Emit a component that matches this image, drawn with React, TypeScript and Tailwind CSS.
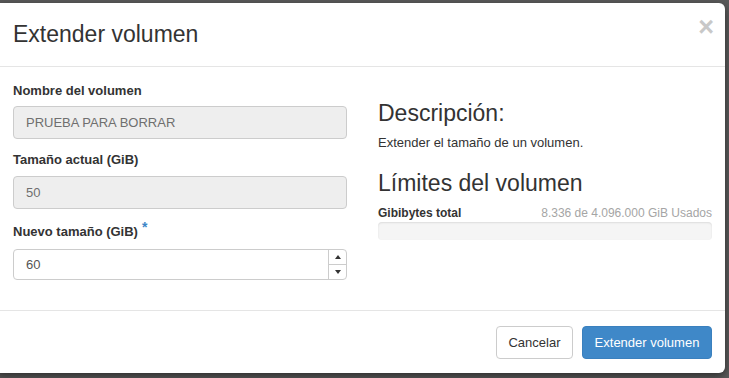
export default function App() {
  return (
    <div
      className="h-[378px] w-[729px] overflow-hidden bg-[#5a5a5a] pt-[3px]"
      style={{ fontFamily: '"Liberation Sans", Arial, sans-serif' }}
    >
      <div className="-ml-[5px] w-[730px] rounded-[6px] bg-white shadow-[0_3px_9px_rgba(0,0,0,0.5)]">
        {/* header */}
        <div className="flex h-[64px] items-start justify-between border-b border-[#e5e5e5] pl-[18px] pr-[13px] pt-[18px]">
          <h4 className="text-[23px] leading-[26px] text-[#333]">Extender volumen</h4>
          <button
            type="button"
            className="-mr-[2px] -mt-[7px] text-[27px] font-bold leading-[26px] text-[#c8c8c8]"
          >
            ×
          </button>
        </div>

        {/* body */}
        <div className="flex gap-[31px] pb-[30px] pl-[18px] pr-[13px] pt-[15px] text-[13px] text-[#333]">
          <div className="flex w-[334px] flex-col">
            <label className="mb-[6px] h-[18px] font-bold leading-[18px]">Nombre del volumen</label>
            <div className="mb-[12px] flex h-[33px] items-center rounded-[4px] border border-[#ccc] bg-[#eee] px-3 text-[#6f6f6f]">
              PRUEBA PARA BORRAR
            </div>
            <label className="mb-[7px] h-[18px] font-bold leading-[18px]">Tamaño actual (GiB)</label>
            <div className="mb-[14px] flex h-[33px] items-center rounded-[4px] border border-[#ccc] bg-[#eee] px-3 text-[#6f6f6f]">
              50
            </div>
            <label className="mb-[8px] flex h-[18px] font-bold leading-[18px]">
              Nuevo tamaño (GiB)
              <span className="ml-[4px] -mt-[5px] text-[14px] text-[#3d87c7]">*</span>
            </label>
            <div className="flex h-[31px] rounded-[4px] border border-[#ccc] bg-white">
              <div className="flex flex-1 items-center px-3 text-[#555]">60</div>
              <div className="flex w-[18px] flex-col border-l border-[#ccc]">
                <div className="flex flex-1 items-center justify-center border-b border-[#ccc]">
                  <span className="h-0 w-0 border-x-[3.5px] border-b-[4px] border-x-transparent border-b-[#333]" />
                </div>
                <div className="flex flex-1 items-center justify-center">
                  <span className="h-0 w-0 border-x-[3.5px] border-t-[4px] border-x-transparent border-t-[#333]" />
                </div>
              </div>
            </div>
          </div>

          <div className="flex w-[334px] flex-col">
            <h3 className="mb-[8px] mt-[18px] text-[23px] leading-[26px]">Descripción:</h3>
            <p className="h-[18px] leading-[18px]">Extender el tamaño de un volumen.</p>
            <h3 className="mb-[9px] mt-[18px] text-[23px] leading-[26px]">Límites del volumen</h3>
            <div className="flex h-[17px] items-center justify-between text-[12px] leading-[17px]">
              <strong>Gibibytes total</strong>
              <span className="text-[#a5a5a5]">8.336 de 4.096.000 GiB Usados</span>
            </div>
            <div className="h-[18px] rounded-[4px] bg-[#f5f5f5] shadow-[inset_0_1px_2px_rgba(0,0,0,0.1)]" />
          </div>
        </div>

        {/* footer */}
        <div className="flex h-[63px] items-start justify-end gap-[9px] border-t border-[#e5e5e5] pr-[13px] pt-[15px] text-[13px]">
          <button
            type="button"
            className="h-[33px] w-[77px] rounded-[4px] border border-[#ccc] bg-white text-[#333]"
          >
            Cancelar
          </button>
          <button
            type="button"
            className="h-[33px] w-[130px] rounded-[4px] border border-[#3a80be] bg-[#3f88c8] text-white"
          >
            Extender volumen
          </button>
        </div>
      </div>
    </div>
  );
}
